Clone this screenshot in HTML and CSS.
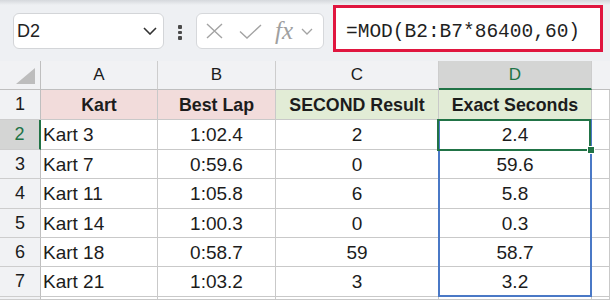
FILE: index.html
```html
<!DOCTYPE html>
<html lang="en">
<head>
    <meta charset="UTF-8">
    <title>Exact Seconds</title>
    <link rel="stylesheet" href="styles.css">
</head>
<body>
    <div class="toolbar">
        <div class="name-box">
            <span>D2</span>
            <svg width="14" height="8" viewBox="0 0 14 8"><polyline points="1,1 7,7 13,1" fill="none" stroke="#333" stroke-width="1.6"/></svg>
        </div>
        <div class="grip"><span></span><span></span><span></span></div>
        <div class="fx-box">
            <svg class="icon-x" width="17" height="16" viewBox="0 0 17 16"><path d="M1 1 L16 15 M16 1 L1 15" stroke="#a3a3a3" stroke-width="1.4" fill="none"/></svg>
            <svg class="icon-check" width="23" height="15" viewBox="0 0 23 15"><path d="M1 7.5 L8 14 L22 1" stroke="#a3a3a3" stroke-width="1.4" fill="none"/></svg>
            <span class="fx">fx</span>
            <svg class="icon-down" width="12" height="7" viewBox="0 0 12 7"><polyline points="1,1 6,6 11,1" fill="none" stroke="#a3a3a3" stroke-width="1.3"/></svg>
        </div>
        <div class="formula">=MOD(B2:B7*86400,60)</div>
    </div>

    <div class="sheet">
        <div class="hd corner"><svg width="19" height="16" viewBox="0 0 19 16"><polygon points="19,0 19,16 0,16" fill="#bdbdbd"/></svg></div>
        <div class="hd">A</div>
        <div class="hd">B</div>
        <div class="hd">C</div>
        <div class="hd active-col">D</div>
        <div class="hd blank"></div>

        <div class="rh">1</div>
        <div class="cell pink bold">Kart</div>
        <div class="cell pink bold">Best Lap</div>
        <div class="cell green bold">SECOND Result</div>
        <div class="cell green bold">Exact Seconds</div>
        <div class="cell"></div>

        <div class="rh active-row">2</div>
        <div class="cell left">Kart 3</div>
        <div class="cell">1:02.4</div>
        <div class="cell">2</div>
        <div class="cell selected">2.4
            <div class="range"></div>
            <div class="pick"></div>
            <div class="handle"></div>
        </div>
        <div class="cell"></div>

        <div class="rh">3</div>
        <div class="cell left">Kart 7</div>
        <div class="cell">0:59.6</div>
        <div class="cell">0</div>
        <div class="cell">59.6</div>
        <div class="cell"></div>

        <div class="rh">4</div>
        <div class="cell left">Kart 11</div>
        <div class="cell">1:05.8</div>
        <div class="cell">6</div>
        <div class="cell">5.8</div>
        <div class="cell"></div>

        <div class="rh">5</div>
        <div class="cell left">Kart 14</div>
        <div class="cell">1:00.3</div>
        <div class="cell">0</div>
        <div class="cell">0.3</div>
        <div class="cell"></div>

        <div class="rh">6</div>
        <div class="cell left">Kart 18</div>
        <div class="cell">0:58.7</div>
        <div class="cell">59</div>
        <div class="cell">58.7</div>
        <div class="cell"></div>

        <div class="rh">7</div>
        <div class="cell left">Kart 21</div>
        <div class="cell">1:03.2</div>
        <div class="cell">3</div>
        <div class="cell">3.2</div>
        <div class="cell"></div>

        <div class="rh"></div>
        <div class="cell"></div>
        <div class="cell"></div>
        <div class="cell"></div>
        <div class="cell"></div>
        <div class="cell"></div>
    </div>
</body>
</html>
```

FILE: styles.css
```css
* {
    margin: 0;
    padding: 0;
    box-sizing: border-box;
}
body {
    width: 610px;
    height: 300px;
    overflow: hidden;
    font-family: "Liberation Sans", Arial, sans-serif;
    color: #1c1c1c;
    background: #ffffff;
}

/* formula bar */
.toolbar {
    height: 61px;
    display: flex;
    align-items: flex-start;
    background: linear-gradient(#d5d8dc, #eef0f3 5px);
}
.name-box {
    margin: 13px 0 0 13px;
    width: 151px;
    height: 36px;
    display: flex;
    align-items: center;
    justify-content: space-between;
    padding: 0 6px 0 3px;
    background: #ffffff;
    border: 1px solid #d3d5d8;
    border-radius: 6px;
    font-size: 18px;
    color: #222;
}
.grip {
    margin: 25px 0 0 14px;
    width: 4px;
    display: flex;
    flex-direction: column;
    gap: 2px;
}
.grip span {
    width: 4px;
    height: 3.5px;
    border-radius: 1px;
    background: #4a4a4a;
}
.fx-box {
    margin: 13px 0 0 14px;
    width: 128px;
    height: 36px;
    display: flex;
    align-items: center;
    padding-left: 9px;
    background: #ffffff;
    border: 1px solid #d6d8db;
    border-radius: 6px;
}
.icon-check {
    margin-left: 16px;
}
.fx {
    margin-left: 13px;
    font-family: "Liberation Serif", serif;
    font-style: italic;
    font-size: 25px;
    color: #a0a0a0;
    line-height: 1;
    margin-top: -2px;
}
.icon-down {
    margin-left: 8px;
}
.formula {
    margin: 5px 0 0 9px;
    width: 270px;
    height: 47px;
    display: flex;
    align-items: center;
    padding: 6px 0 0 10px;
    background: #ffffff;
    border: 3px solid #e0163f;
    font-family: "Liberation Mono", monospace;
    font-size: 19.5px;
    color: #1f1f1f;
}

/* worksheet */
.sheet {
    display: grid;
    grid-template-columns: 41px 117px 118px 163px 153px 1fr;
    grid-template-rows: 29px 30px 30px 29px 30px 29px 29px 30px 1fr;
    height: 239px;
}
.hd {
    background: #f1f2f4;
    border-right: 1px solid #cdcdcd;
    border-bottom: 1px solid #bfbfbf;
    display: flex;
    align-items: center;
    justify-content: center;
    font-size: 17px;
    color: #1c1c1c;
}
.hd.corner {
    align-items: flex-end;
    justify-content: flex-end;
    padding: 0 5px 5px 0;
    border-right-color: #bfbfbf;
}
.hd.blank {
    border-right: none;
}
.hd.active-col {
    background: #d4d5d4;
    color: #217346;
    border-bottom: 2px solid #217346;
}
.rh {
    background: #f1f2f4;
    border-right: 1px solid #bfbfbf;
    border-bottom: 1px solid #cdcdcd;
    display: flex;
    align-items: center;
    justify-content: center;
    font-size: 18px;
    color: #1c1c1c;
}
.rh.active-row {
    background: #d4d5d4;
    color: #217346;
    border-right: 2px solid #217346;
}
.cell {
    position: relative;
    border-right: 1px solid #c9c9c9;
    border-bottom: 1px solid #c9c9c9;
    display: flex;
    align-items: center;
    justify-content: center;
    padding-top: 1px;
    font-size: 19px;
    white-space: nowrap;
}
.cell.left {
    justify-content: flex-start;
    padding-left: 2px;
}
.cell.bold {
    font-weight: bold;
    font-size: 17.8px;
}
.cell.pink {
    background: #f2dcdb;
}
.cell.green {
    background: #e2ecd6;
}

/* selection and spill range */
.cell.selected {
    z-index: 2;
}
.range {
    position: absolute;
    left: -1px;
    right: -1px;
    top: -1px;
    height: 178px;
    border: 2px solid #4a78c6;
}
.pick {
    position: absolute;
    left: -2px;
    right: 0;
    top: -1px;
    bottom: -2px;
    border: 2px solid #217346;
}
.handle {
    position: absolute;
    right: -4px;
    bottom: -5px;
    width: 8px;
    height: 8px;
    background: #217346;
    border: 1px solid #ffffff;
}
```
